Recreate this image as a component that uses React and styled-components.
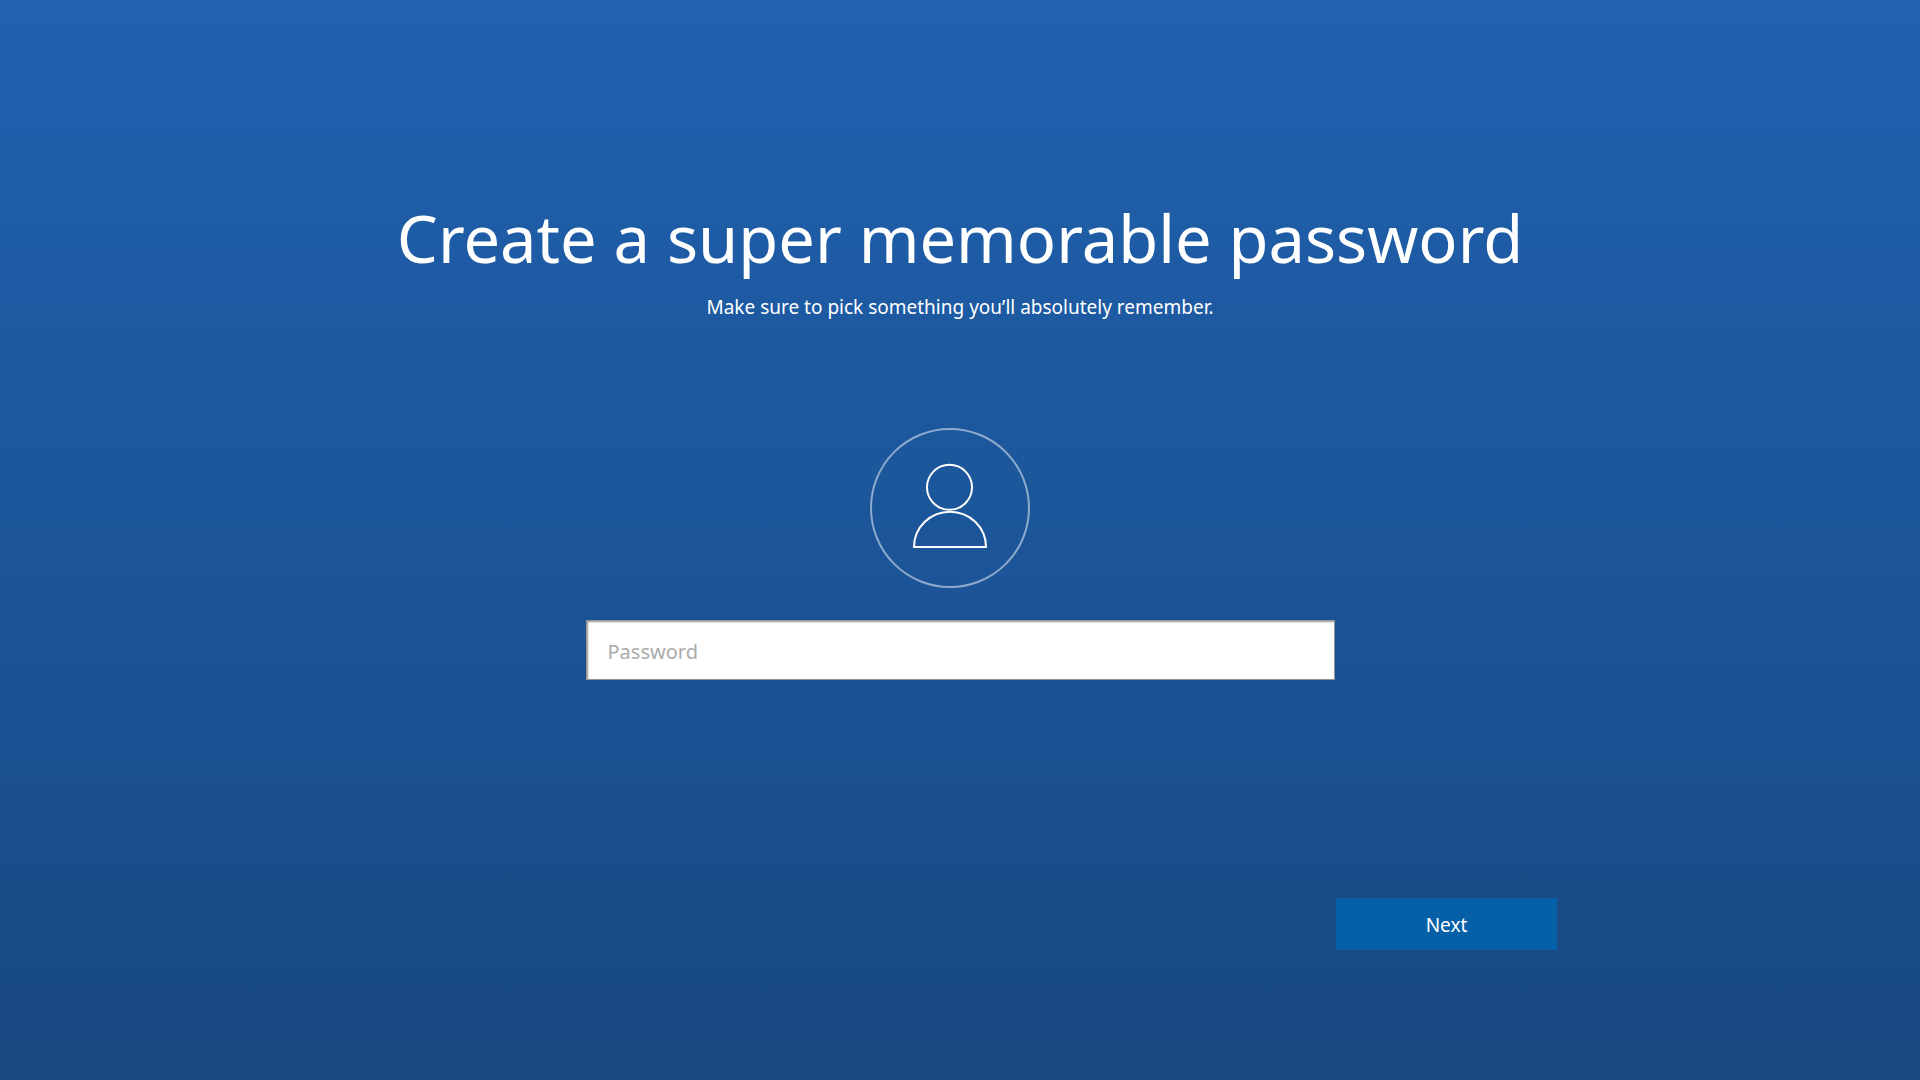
import React, { useState } from "react";
import styled, { createGlobalStyle } from "styled-components";

const GlobalStyle = createGlobalStyle`
  *, *::before, *::after {
    box-sizing: border-box;
  }
  body {
    margin: 0;
    font-family: "Segoe UI", "Noto Sans", "Open Sans", sans-serif;
    color: #ffffff;
  }
`;

const Page = styled.main`
  min-height: 100vh;
  padding: 188px 24px 130px;
  display: flex;
  flex-direction: column;
  background: linear-gradient(
    180deg,
    #2161b0 0%,
    #1e5ba4 25%,
    #1c569a 47%,
    #1a4f90 72%,
    #194b86 86%,
    #174880 100%
  );
`;

const Content = styled.form`
  width: 100%;
  max-width: 1194px;
  margin: 0 auto;
  flex: 1;
  display: flex;
  flex-direction: column;
  align-items: center;
`;

const Title = styled.h1`
  margin: 0;
  font-size: 65px;
  line-height: 100px;
  font-weight: 400;
  text-align: center;
`;

const Subtitle = styled.p`
  margin: 4px 0 0;
  font-size: 19px;
  line-height: 30px;
  text-align: center;
`;

const Credentials = styled.section`
  width: 100%;
  max-width: 749px;
  margin-top: 106px;
  display: flex;
  flex-direction: column;
  gap: 32px;
`;

const AvatarRow = styled.div`
  padding-right: 20px;
  display: flex;
  justify-content: center;
`;

const Avatar = styled.svg`
  width: 160px;
  height: 160px;
  fill: none;
  stroke: #ffffff;
  stroke-width: 2;
`;

const PasswordInput = styled.input`
  width: 100%;
  height: 60px;
  padding: 2px 21px 0;
  border: 1px solid #989494;
  border-radius: 0;
  outline: none;
  background: #ffffff;
  box-shadow: inset 1px 1px 2px rgba(0, 0, 0, 0.4);
  color: #222222;
  font-family: inherit;
  font-size: 20px;

  &::placeholder {
    color: #ababab;
    opacity: 1;
  }
`;

const Actions = styled.footer`
  width: 100%;
  margin-top: auto;
  display: flex;
  justify-content: flex-end;
`;

const NextButton = styled.button`
  width: 221px;
  height: 52px;
  padding: 2px 0 0;
  border: 0;
  background: #0560a8;
  color: #ffffff;
  font-family: inherit;
  font-size: 19px;
  cursor: pointer;
`;

function UserAvatar() {
  return (
    <Avatar viewBox="0 0 160 160" aria-hidden="true">
      <circle cx="80" cy="80" r="79" strokeOpacity="0.5" />
      <circle cx="79.5" cy="59.3" r="22.5" />
      <path d="M44 119 A36 35.3 0 0 1 116 119 Z" />
    </Avatar>
  );
}

export default function App() {
  const [password, setPassword] = useState("");

  return (
    <>
      <GlobalStyle />
      <Page>
        <Content onSubmit={(event) => event.preventDefault()}>
          <Title>Create a super memorable password</Title>
          <Subtitle>Make sure to pick something you’ll absolutely remember.</Subtitle>
          <Credentials>
            <AvatarRow>
              <UserAvatar />
            </AvatarRow>
            <PasswordInput
              type="password"
              aria-label="Password"
              placeholder="Password"
              value={password}
              onChange={(event) => setPassword(event.target.value)}
            />
          </Credentials>
          <Actions>
            <NextButton type="submit">Next</NextButton>
          </Actions>
        </Content>
      </Page>
    </>
  );
}
